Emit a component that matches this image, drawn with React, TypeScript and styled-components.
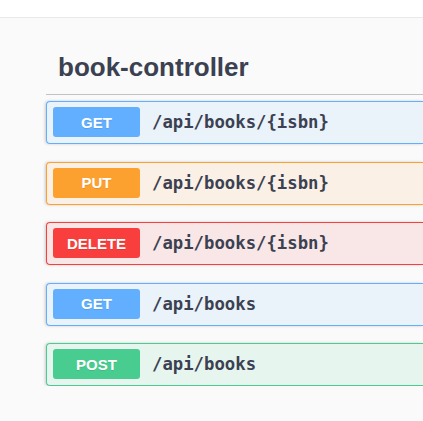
import React from 'react'
import styled, { createGlobalStyle } from 'styled-components'

type Method = 'GET' | 'PUT' | 'DELETE' | 'POST'

const colors: Record<Method, { main: string; bg: string }> = {
  GET: { main: '#61affe', bg: 'rgba(97,175,254,.1)' },
  PUT: { main: '#fca130', bg: 'rgba(252,161,48,.1)' },
  DELETE: { main: '#f93e3e', bg: 'rgba(249,62,62,.1)' },
  POST: { main: '#49cc90', bg: 'rgba(73,204,144,.1)' },
}

const ops: { method: Method; path: string }[] = [
  { method: 'GET', path: '/api/books/{isbn}' },
  { method: 'PUT', path: '/api/books/{isbn}' },
  { method: 'DELETE', path: '/api/books/{isbn}' },
  { method: 'GET', path: '/api/books' },
  { method: 'POST', path: '/api/books' },
]

const GlobalStyle = createGlobalStyle`
  html, body {
    margin: 0;
    padding: 0;
    background: #fafafa;
    overflow: hidden;
  }
  body {
    font-family: "Liberation Sans", Arial, sans-serif;
    color: #3b4151;
  }
`

export default function App() {
  return (
    <>
      <GlobalStyle />
      <TopBar />
      <Wrapper>
        <Tag>book-controller</Tag>
        <List>
          {ops.map((op, i) => (
            <OpBlock key={i} method={op.method}>
              <Badge method={op.method}>{op.method}</Badge>
              <Path>{op.path}</Path>
            </OpBlock>
          ))}
        </List>
      </Wrapper>
    </>
  )
}

const TopBar = styled.div`
  height: 17px;
  background: #ffffff;
  border-bottom: 1px solid #e9e9e9;
`
const Wrapper = styled.div`
  margin-left: 46px;
`
const Tag = styled.h3`
  margin: 22px 0 0;
  padding: 10px 20px 10px 12px;
  font-size: 26px;
  line-height: 34px;
  font-weight: 700;
  color: #3b4151;
  border-bottom: 1px solid rgba(59, 65, 81, 0.3);
`
const List = styled.div`
  margin-top: 6px;
  display: flex;
  flex-direction: column;
  gap: 17.5px;
`
const OpBlock = styled.div<{ method: Method }>`
  display: flex;
  align-items: center;
  padding: 5px 6px 6px 6px;
  border: 1px solid ${p => colors[p.method].main};
  border-right: none;
  background: ${p => colors[p.method].bg};
  border-radius: 4px 0 0 4px;
  box-shadow: -1px 0 3px rgba(0, 0, 0, 0.19);
`
const Badge = styled.span<{ method: Method }>`
  width: 87px;
  height: 30px;
  display: flex;
  align-items: center;
  justify-content: center;
  background: ${p => colors[p.method].main};
  color: #ffffff;
  border-radius: 3px;
  font-size: 15px;
  font-weight: 700;
  text-shadow: 0 1px 0 rgba(0, 0, 0, 0.1);
`
const Path = styled.span`
  margin-left: 12px;
  font-family: "DejaVu Sans Mono", monospace;
  font-size: 17.3px;
  font-weight: 700;
  color: #3b4151;
`
